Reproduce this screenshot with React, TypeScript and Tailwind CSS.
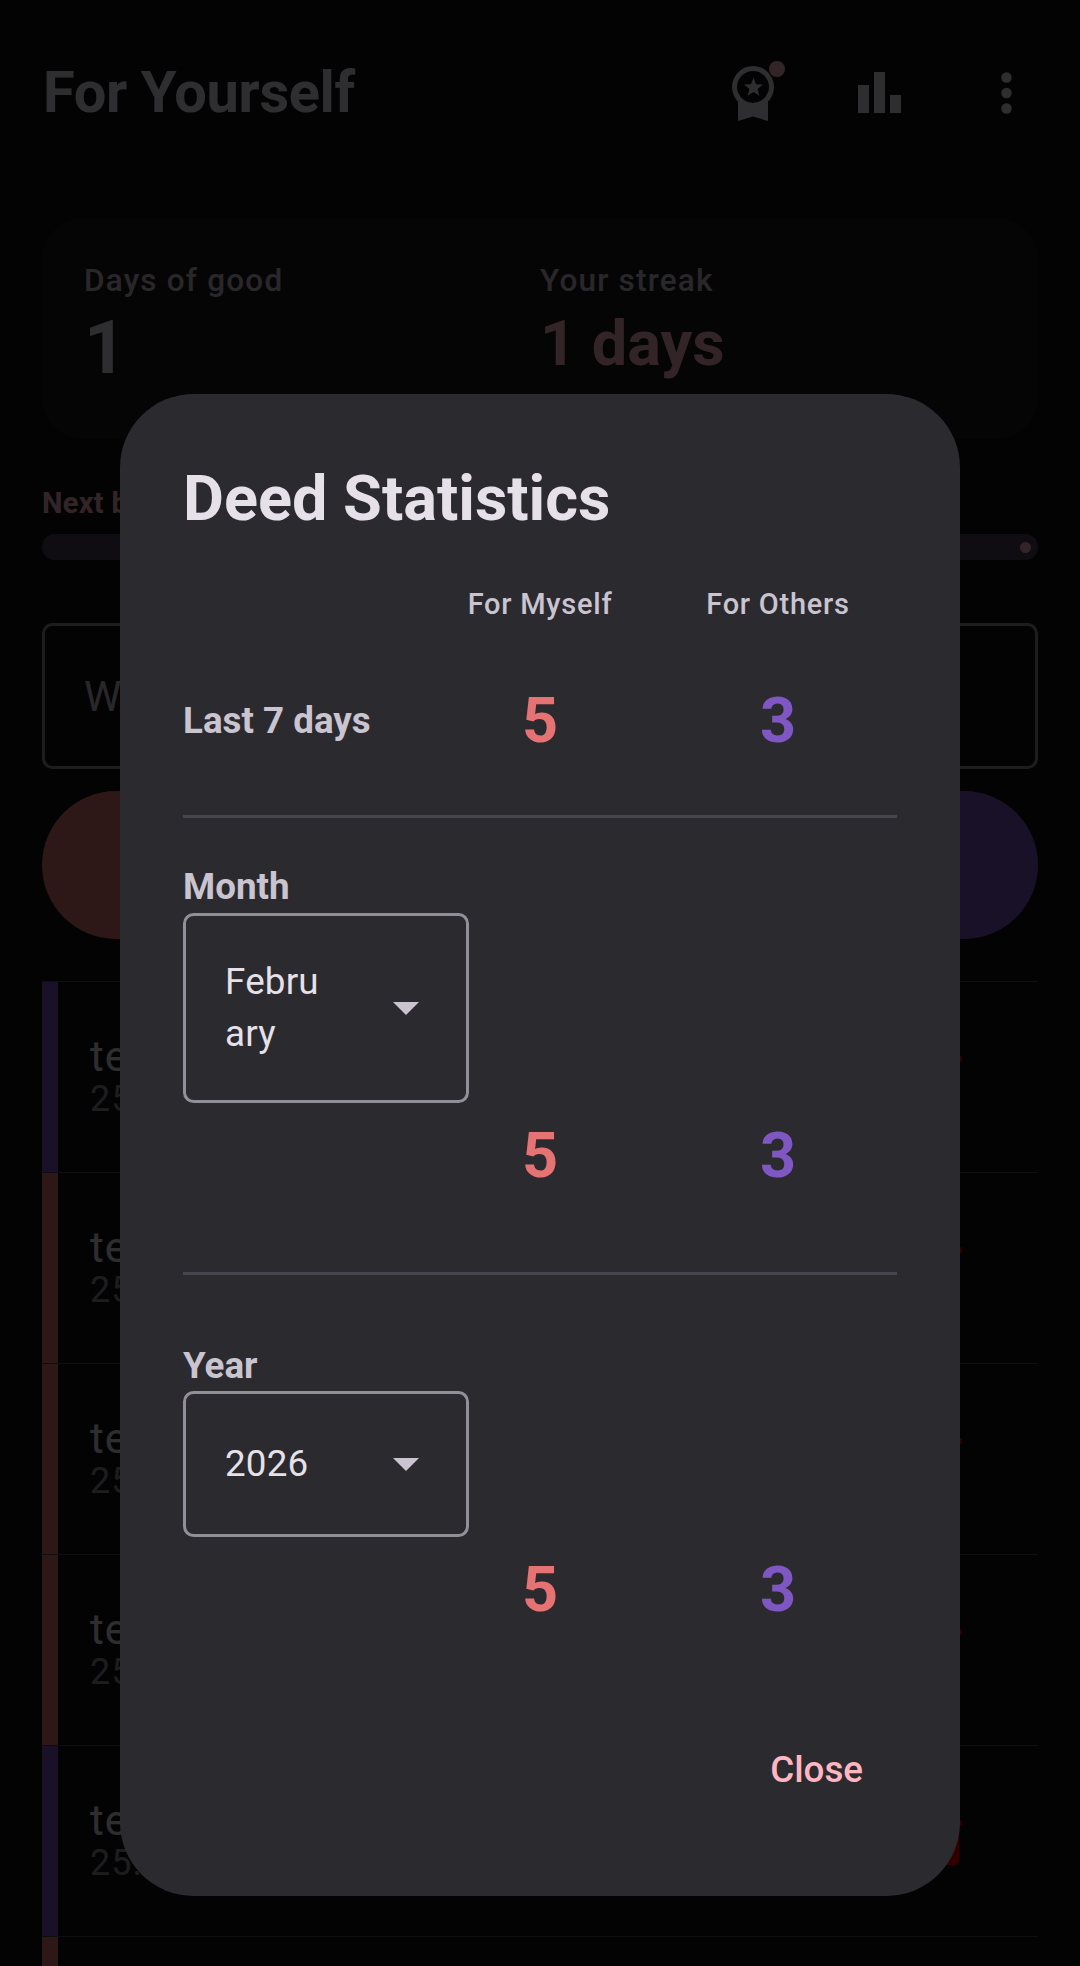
const rows = ["purple", "red", "red", "red", "purple", "red"];

function Row({ tone }: { tone: string }) {
  return (
    <div className="h-[191px] flex border-t border-[#49454f]">
      <div className={tone === "red" ? "w-[16px] bg-[#e57373]" : "w-[16px] bg-[#7e57c2]"} />
      <div className="flex-1 pl-[32px] pr-[63px] flex justify-between items-center">
        <div className="mb-[8px]">
          <div className="text-[42px] leading-[52px] tracking-[1px] text-[#e6e0e9]">test</div>
          <div className="text-[36px] leading-[32px] tracking-[1px] text-[#938f99]">25.02.2026</div>
        </div>
        <svg width="63" height="63" viewBox="0 0 24 24" fill="#ff0000">
          <path d="M6 19c0 1.1.9 2 2 2h8c1.1 0 2-.9 2-2V7H6v12zM19 4h-3.5l-1-1h-5l-1 1H5v2h14V4z" />
        </svg>
      </div>
    </div>
  );
}

function Stat({ label, mine, others }: { label?: string; mine: string; others: string }) {
  return (
    <div className="flex items-center">
      <div className="w-[238px] text-[36.75px] font-bold text-[#cac4d0]">{label}</div>
      <div className="w-[238px] text-center text-[63px] leading-[84px] font-bold text-[#e57373]">{mine}</div>
      <div className="w-[238px] text-center text-[63px] leading-[84px] font-bold text-[#7e57c2]">{others}</div>
    </div>
  );
}

function Select({ children, tall }: { children: React.ReactNode; tall?: boolean }) {
  return (
    <div
      className={
        tall
          ? "h-[190px] w-[286px] border-[3px] border-[#938f99] rounded-[10.5px] flex items-center pl-[39px] pr-[47px] justify-between"
          : "h-[146px] w-[286px] border-[3px] border-[#938f99] rounded-[10.5px] flex items-center pl-[39px] pr-[47px] justify-between"
      }
    >
      <div className="w-[100px] text-[36.75px] leading-[52.5px] tracking-[0.2px] text-[#e6e0e9] break-all">{children}</div>
      <svg width="26" height="13" viewBox="0 0 26 13" className="shrink-0">
        <path d="M0 0h26L13 13z" fill="#cac4d0" />
      </svg>
    </div>
  );
}

export default function App() {
  return (
    <div className="relative w-[1080px] h-[1966px] overflow-hidden bg-[#141218] font-['Roboto',sans-serif]">
      <div className="px-[42px]">
        <header className="h-[218px] pt-[58px] flex justify-between items-start">
          <h1 className="ml-[1px] text-[57.75px] leading-[68px] font-bold tracking-[-0.35px] text-[#e6e0e9]">For Yourself</h1>
          <div className="flex items-start pr-[26px] text-[#e6e0e9]">
            <div className="relative mt-[8px]">
              <svg width="42" height="55" viewBox="0 0 42 55" fill="currentColor" className="block">
                <path fillRule="evenodd" d="M21 0a21 21 0 1 0 0 42a21 21 0 1 0 0-42zM21 5a16 16 0 1 1 0 32a16 16 0 1 1 0-32z" />
                <path d="M6 26.6V55l15-4.5L36 55V26.6A16 16 0 0 1 6 26.6z" />
                <path d="M21.5 11.7l2.5 6.6 7 .3-5.5 4.4 1.9 6.8-5.9-3.9-5.9 3.9 1.9-6.8-5.5-4.4 7-.3z" />
              </svg>
              <div className="absolute left-[37px] top-[-5px] w-[16px] h-[16px] rounded-full bg-[#ffb6c1]" />
            </div>
            <svg width="43" height="41" viewBox="0 0 43 41" fill="currentColor" className="ml-[84px] mt-[14px]">
              <path d="M0 13h11v28H0zM16 0h11v41H16zM32 23h11v18H32z" />
            </svg>
            <svg width="11" height="42" viewBox="0 0 11 42" fill="currentColor" className="ml-[100px] mt-[14px]">
              <circle cx="5.5" cy="5.5" r="5.25" />
              <circle cx="5.5" cy="21" r="5.25" />
              <circle cx="5.5" cy="36.5" r="5.25" />
            </svg>
          </div>
        </header>

        <section className="h-[221px] rounded-[42px] bg-[#1d1b20] pl-[42px] pt-[42px] flex">
          <div className="w-[456px]">
            <div className="text-[31.5px] leading-[42px] font-medium tracking-[1.2px] text-[#cac4d0]">Days of good</div>
            <div className="mt-[4px] text-[73.5px] leading-[84px] font-bold text-[#e6e0e9]">1</div>
          </div>
          <div>
            <div className="text-[31.5px] leading-[42px] font-medium tracking-[1.2px] text-[#cac4d0]">Your streak</div>
            <div className="text-[63px] leading-[84px] font-bold text-[#ffb6c1]">1 days</div>
          </div>
        </section>

        <div className="mt-[45px] text-[29px] leading-[38px] font-bold tracking-[0.3px] text-[#ffb6c1]">Next badge in 2 days</div>
        <div className="mt-[12px] h-[26px] rounded-full bg-[#4a4458] flex items-center justify-end pr-[7px]">
          <div className="w-[11px] h-[11px] rounded-full bg-[#ffb6c1]" />
        </div>

        <div className="mt-[63px] h-[146px] border-[3px] border-[#938f99] rounded-[10.5px] flex items-center pl-[39px] text-[42px] text-[#cac4d0]">
          What good did you do?
        </div>

        <div className="mt-[22px] flex gap-[16px]">
          <div className="flex-1 h-[148px] rounded-full bg-[#e57373]" />
          <div className="flex-1 h-[148px] rounded-full bg-[#7e57c2]" />
        </div>

        <div className="mt-[42px]">
          {rows.map((tone, i) => (
            <Row key={i} tone={tone} />
          ))}
        </div>
      </div>

      <div className="absolute inset-0 bg-black/80" />

      <div className="absolute left-[120px] top-[394px] w-[840px] h-[1502px] rounded-[73.5px] bg-[#2b2a2f] px-[63px] pt-[65px]">
        <h2 className="text-[63px] leading-[79px] font-bold text-[#e6e0e9]">Deed Statistics</h2>
        <div className="mt-[45px] flex text-[29px] leading-[42px] font-medium tracking-[0.75px] text-[#cac4d0]">
          <div className="w-[238px]" />
          <div className="w-[238px] text-center">For Myself</div>
          <div className="w-[238px] text-center">For Others</div>
        </div>
        <div className="mt-[54px]">
          <Stat label="Last 7 days" mine="5" others="3" />
        </div>
        <div className="mt-[52px] h-[3px] bg-[#49454f]" />

        <div className="mt-[45px] mb-[2px] text-[36.75px] leading-[48px] font-bold text-[#cac4d0]">Month</div>
        <Select tall>February</Select>
        <div className="mt-[11px]">
          <Stat mine="5" others="3" />
        </div>
        <div className="mt-[74px] h-[3px] bg-[#49454f]" />

        <div className="mt-[67px] mb-[1px] text-[36.75px] leading-[48px] font-bold text-[#cac4d0]">Year</div>
        <Select>2026</Select>
        <div className="mt-[11px]">
          <Stat mine="5" others="3" />
        </div>

        <div className="mt-[110px] flex justify-end pr-[34px] text-[36.75px] font-medium text-[#ffb6c1]">Close</div>
      </div>
    </div>
  );
}
